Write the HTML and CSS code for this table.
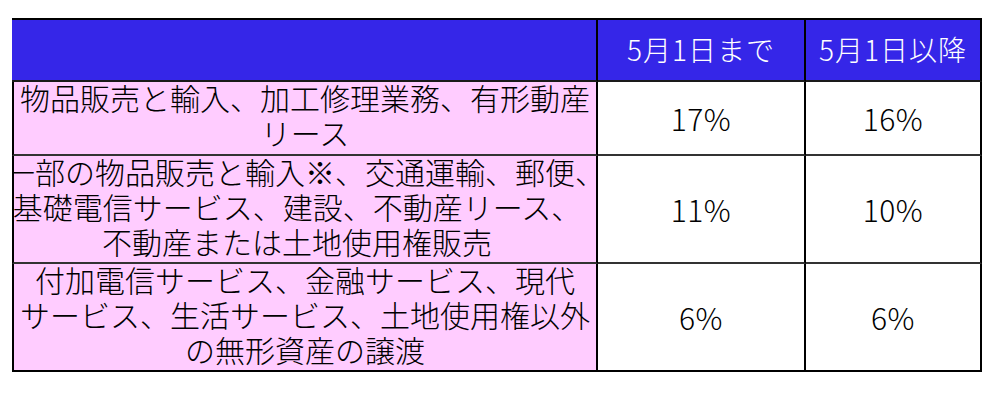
FILE: index.html
```html
<!DOCTYPE html>
<html lang="ja">
<head>
<meta charset="utf-8">
<title>税率表</title>
<link rel="stylesheet" href="styles.css">
</head>
<body>
<div class="rate-table">
  <div class="cell head head-blank"></div>
  <div class="cell head"><span class="hline">5月1日まで</span></div>
  <div class="cell head"><span class="hline">5月1日以降</span></div>

  <div class="cell label">
    <div class="line">物品販売と輸入、加工修理業務、有形動産</div>
    <div class="line">リース</div>
  </div>
  <div class="cell value">17%</div>
  <div class="cell value">16%</div>

  <div class="cell label">
    <div class="line">一部の物品販売と輸入※、交通運輸、郵便、</div>
    <div class="line shift">基礎電信サービス、建設、不動産リース、</div>
    <div class="line shift">不動産または土地使用権販売</div>
  </div>
  <div class="cell value">11%</div>
  <div class="cell value">10%</div>

  <div class="cell label last">
    <div class="line">付加電信サービス、金融サービス、現代</div>
    <div class="line">サービス、生活サービス、土地使用権以外</div>
    <div class="line">の無形資産の譲渡</div>
  </div>
  <div class="cell value last">6%</div>
  <div class="cell value last">6%</div>
</div>
</body>
</html>
```

FILE: styles.css
```css
* {
  box-sizing: border-box;
}

body {
  margin: 0;
  background: #ffffff;
  font-family: "Noto Sans CJK JP", "Noto Sans", sans-serif;
  font-weight: 300;
  color: #000000;
}

.rate-table {
  margin: 18px 0 0 12px;
  width: 970px;
  display: grid;
  grid-template-columns: 586px 208px 176px;
  grid-template-rows: 62px 74px 108px 108px;
  border-top: 2px solid #000000;
}

.cell {
  display: flex;
  flex-direction: column;
  align-items: center;
  justify-content: center;
  overflow: hidden;
  border-right: 2px solid #000000;
  border-bottom: 2px solid #333333;
}

.head {
  background: #3526e8;
  color: #ffffff;
  font-size: 28px;
  line-height: 34px;
  border-bottom-color: #1a1a1a;
}

.hline {
  white-space: nowrap;
  letter-spacing: 1px;
  position: relative;
  top: -1px;
}

.label {
  background: #ffccff;
  border-left: 2px solid #000000;
  font-size: 30px;
  line-height: 35px;
}

.line {
  white-space: nowrap;
  position: relative;
  top: -3px;
}

.line.shift {
  padding-right: 16px;
}

.value {
  background: #ffffff;
  font-size: 30px;
  line-height: 35px;
  letter-spacing: 0.5px;
}

.last {
  border-bottom-color: #000000;
}
```
